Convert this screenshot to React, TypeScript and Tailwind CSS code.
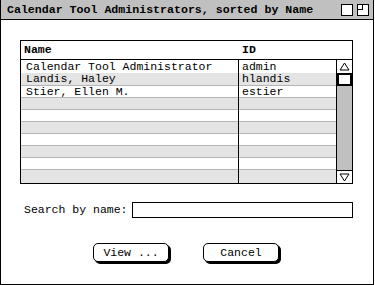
import React from "react";

const rows = [
  { name: "Calendar Tool Administrator", id: "admin" },
  { name: "Landis, Haley", id: "hlandis" },
  { name: "Stier, Ellen M.", id: "estier" },
  { name: "", id: "" },
  { name: "", id: "" },
  { name: "", id: "" },
  { name: "", id: "" },
  { name: "", id: "" },
  { name: "", id: "" },
  { name: "", id: "" },
];

// row heights incl. separator line
const heights = ["h-[13px]", "h-[13px]", "h-[12px]", "h-[12px]", "h-[12px]", "h-[12px]", "h-[12px]", "h-[12px]", "h-[12px]", "h-[13px]"];

function Button({ label }: { label: string }) {
  return (
    <div className="w-[76px] h-[19px] border border-black rounded-[5px] bg-white shadow-[2px_2px_0_0_#000] flex items-center justify-center text-[11.5px] leading-none">
      {label}
    </div>
  );
}

export default function App() {
  return (
    <div
      className="w-[374px] h-[285px] bg-white border-x border-b border-black flex flex-col text-black"
      style={{ fontFamily: '"Liberation Mono", "DejaVu Sans Mono", monospace' }}
    >
      {/* title bar */}
      <div className="h-[20px] bg-[#c0c0c0] border-b border-black flex items-center pl-[6px] pr-[4px] shrink-0">
        <span className="font-bold text-[11.6px] leading-none flex-1">
          Calendar Tool Administrators, sorted by Name
        </span>
        <div className="w-[12px] h-[12px] border border-black bg-white" />
        <div className="w-[12px] h-[12px] border border-black bg-white ml-[4px] relative">
          <div className="absolute left-0 top-0 w-[5px] h-[5px] border-r border-b border-black" />
        </div>
      </div>

      {/* list */}
      <div className="mt-[20px] ml-[19px] w-[333px] border border-black flex flex-col">
        <div className="h-[19px] border-b border-black flex items-center font-bold text-[11.5px] leading-none">
          <div className="w-[218px] pl-[3px]">Name</div>
          <div className="pl-[3px]">ID</div>
        </div>
        <div className="flex">
          <div className="w-[217px] flex flex-col">
            {rows.map((r, i) => (
              <div
                key={i}
                className={`${heights[i]} flex items-center pl-[5px] text-[11.5px] leading-none whitespace-nowrap ${i % 2 === 1 ? "bg-[#e4e4e4]" : "bg-white"} ${i > 0 && i < 9 ? "border-b border-[#b4b4b4]" : ""}`}
              >
                {r.name}
              </div>
            ))}
          </div>
          <div className="w-[97px] border-l border-black flex flex-col box-content">
            {rows.map((r, i) => (
              <div
                key={i}
                className={`${heights[i]} flex items-center pl-[3px] text-[11.5px] leading-none whitespace-nowrap ${i % 2 === 1 ? "bg-[#e4e4e4]" : "bg-white"} ${i > 0 && i < 9 ? "border-b border-[#b4b4b4]" : ""}`}
              >
                {r.id}
              </div>
            ))}
          </div>
          {/* scrollbar */}
          <div className="w-[15px] border-l border-black box-content flex flex-col bg-[#c0c0c0]">
            <div className="h-[13px] bg-white flex items-center justify-center">
              <svg width="11" height="9" viewBox="0 0 11 9">
                <path d="M1 8 L5.5 1 L10 8 Z" fill="none" stroke="#000" strokeWidth="1" />
              </svg>
            </div>
            <div className="h-[13px] bg-white border-2 border-black" />
            <div className="flex-1" />
            <div className="h-[13px] bg-white border-t border-black flex items-center justify-center">
              <svg width="11" height="9" viewBox="0 0 11 9">
                <path d="M1 1 L5.5 8 L10 1 Z" fill="none" stroke="#000" strokeWidth="1" />
              </svg>
            </div>
          </div>
        </div>
      </div>

      {/* search */}
      <div className="mt-[18px] ml-[23px] flex items-center">
        <span className="text-[11.5px] leading-none">Search by name:</span>
        <div className="ml-[4px] w-[221px] h-[16px] border border-black bg-white" />
      </div>

      {/* buttons */}
      <div className="mt-[25px] ml-[92px] flex gap-[34px]">
        <Button label="View ..." />
        <Button label="Cancel" />
      </div>
    </div>
  );
}
